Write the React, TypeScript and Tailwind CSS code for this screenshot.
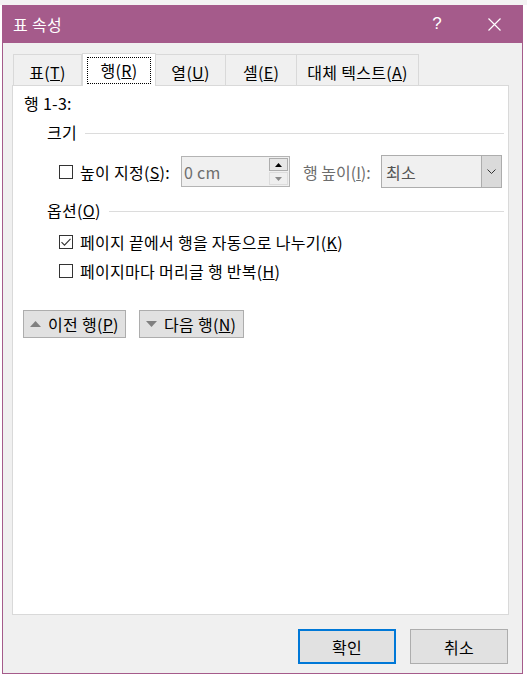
import React from "react";

const font = { fontFamily: '"Noto Sans CJK KR", "Noto Sans", sans-serif' };

function Check({ checked }: { checked?: boolean }) {
  return (
    <span className="flex h-[14px] w-[14px] shrink-0 items-center justify-center border border-[#333333] bg-white">
      {checked && (
        <svg width="12" height="12" viewBox="0 0 12 12" fill="none" stroke="#333" strokeWidth="1.1">
          <path d="M1.5 6.2 L4.5 9.2 L10.5 2.8" />
        </svg>
      )}
    </span>
  );
}

function Tab({ label, mn, active, w }: { label: string; mn: string; active?: boolean; w: string }) {
  if (active) {
    return (
      <div className={`relative z-10 -mb-px flex h-[33px] ${w} items-center justify-center border border-b-0 border-[#d9d9d9] bg-white`}>
        <span className="flex h-[27px] w-[64px] items-center justify-center border border-dotted border-black pb-[1px]">
          {label}(<u>{mn}</u>)
        </span>
      </div>
    );
  }
  return (
    <div className={`-ml-px flex h-[31px] ${w} items-center justify-center border border-b-0 border-[#d9d9d9] bg-[#f0f0f0] pt-[3px] first:ml-0`}>
      {label}(<u>{mn}</u>)
    </div>
  );
}

function GroupHead({ children }: { children: React.ReactNode }) {
  return (
    <div className="flex h-[20px] items-center pl-[23px] pr-[4px]">
      <span className="shrink-0">{children}</span>
      <span className="ml-[8px] mt-[3px] h-px flex-1 bg-[#dcdcdc]" />
    </div>
  );
}

export default function App() {
  return (
    <div className="h-[677px] w-[527px] overflow-hidden bg-white text-[16px] leading-[20px] tracking-[0.3px] text-black" style={font}>
      <div className="flex h-[5px] w-full bg-[#f3f3f3]" />
      <div className="flex">
        <div className="h-[669px] w-[2px] bg-white" />
        <div className="flex h-[669px] w-[521px] flex-col border border-[#a55b8b] bg-[#f0f0f0]">
          {/* title bar */}
          <div className="flex h-[37px] shrink-0 items-center bg-[#a55b8b] pl-[10px] text-white">
            <span className="pb-[2px]">표 속성</span>
            <span className="ml-auto mr-[46px] pb-[2px] text-[17px]" style={{ fontFamily: '"Liberation Sans", sans-serif' }}>?</span>
            <svg className="mr-[21px]" width="13" height="13" viewBox="0 0 13 13" stroke="white" strokeWidth="1.2">
              <path d="M0.5 0.5 L12.5 12.5 M12.5 0.5 L0.5 12.5" />
            </svg>
          </div>

          <div className="flex flex-1 flex-col pl-[9px] pr-[13px] pt-[10px]">
            {/* tabs */}
            <div className="flex items-end pl-px">
              <Tab label="표" mn="T" w="w-[69px]" />
              <Tab label="행" mn="R" active w="w-[74px]" />
              <Tab label="열" mn="U" w="w-[71px]" />
              <Tab label="셀" mn="E" w="w-[72px]" />
              <Tab label="대체 텍스트" mn="A" w="w-[123px]" />
            </div>

            {/* panel */}
            <div className="flex h-[530px] flex-col border border-[#d9d9d9] bg-white pl-[11px]">
              <div className="mt-[7px] flex h-[20px] items-center">행 1-3:</div>

              <div className="mt-[9px]">
                <GroupHead>크기</GroupHead>
              </div>

              <div className="mt-[13px] flex h-[33px] items-center">
                <div className="ml-[35px] flex w-[122px] items-center">
                  <Check />
                  <span className="ml-[7px] whitespace-nowrap">
                    높이 지정(<u>S</u>):
                  </span>
                </div>
                <div className="flex h-[31px] w-[109px] items-center border border-[#b4b4b4] bg-[#f0f0f0]">
                  <span className="ml-[2px] flex-1 text-[#6d6d6d]">0 cm</span>
                  <div className="mr-[1px] flex h-[27px] w-[19px] flex-col">
                    <div className="flex h-[13px] items-center justify-center border border-[#adadad] bg-[#e6e6e6]">
                      <svg width="7" height="4" viewBox="0 0 7 4"><path d="M0 4 L3.5 0 L7 4 Z" fill="#000" /></svg>
                    </div>
                    <div className="mt-px flex h-[13px] items-center justify-center border border-[#dcdcdc] bg-[#efefef]">
                      <svg width="7" height="4" viewBox="0 0 7 4"><path d="M0 0 L3.5 4 L7 0 Z" fill="#8a8a8a" /></svg>
                    </div>
                  </div>
                </div>
                <span className="ml-[13px] w-[78px] whitespace-nowrap tracking-normal text-[#6d6d6d]">
                  행 높이(<u>I</u>):
                </span>
                <div className="flex h-[33px] w-[121px] border border-[#adadad] bg-[#f0f0f0]">
                  <span className="ml-[4px] flex-1 self-center text-[#555555]">최소</span>
                  <div className="flex w-[20px] items-center justify-center border-l border-[#adadad] bg-[#dadada]">
                    <svg width="9" height="5" viewBox="0 0 9 5" fill="none" stroke="#333" strokeWidth="1">
                      <path d="M0.5 0.5 L4.5 4.5 L8.5 0.5" />
                    </svg>
                  </div>
                </div>
              </div>

              <div className="mt-[12px]">
                <GroupHead>
                  옵션(<u>O</u>)
                </GroupHead>
              </div>

              <div className="ml-[35px] mt-[12px] flex h-[20px] items-center">
                <Check checked />
                <span className="ml-[7px]">
                  페이지 끝에서 행을 자동으로 나누기(<u>K</u>)
                </span>
              </div>
              <div className="ml-[35px] mt-[9px] flex h-[20px] items-center">
                <Check />
                <span className="ml-[7px]">
                  페이지마다 머리글 행 반복(<u>H</u>)
                </span>
              </div>

              <div className="-ml-px mt-[29px] flex gap-[13px]">
                <button className="flex h-[28px] w-[103px] items-center border border-[#adadad] bg-[#e1e1e1] pl-[6px]">
                  <svg width="11" height="6" viewBox="0 0 11 6"><path d="M0 6 L5.5 0 L11 6 Z" fill="#808080" /></svg>
                  <span className="ml-[7px] whitespace-nowrap">
                    이전 행(<u>P</u>)
                  </span>
                </button>
                <button className="flex h-[28px] w-[105px] items-center border border-[#adadad] bg-[#e1e1e1] pl-[6px]">
                  <svg width="11" height="6" viewBox="0 0 11 6"><path d="M0 0 L5.5 6 L11 0 Z" fill="#808080" /></svg>
                  <span className="ml-[7px] whitespace-nowrap">
                    다음 행(<u>N</u>)
                  </span>
                </button>
              </div>
            </div>

            {/* footer buttons */}
            <div className="mt-[14px] flex justify-end gap-[14px] pr-px">
              <button className="h-[35px] w-[98px] border-2 border-[#0078d7] bg-[#e1e1e1]">확인</button>
              <button className="h-[35px] w-[98px] border border-[#adadad] bg-[#e1e1e1]">취소</button>
            </div>
          </div>
        </div>
        <div className="h-[669px] w-[4px] bg-white" />
      </div>
    </div>
  );
}
